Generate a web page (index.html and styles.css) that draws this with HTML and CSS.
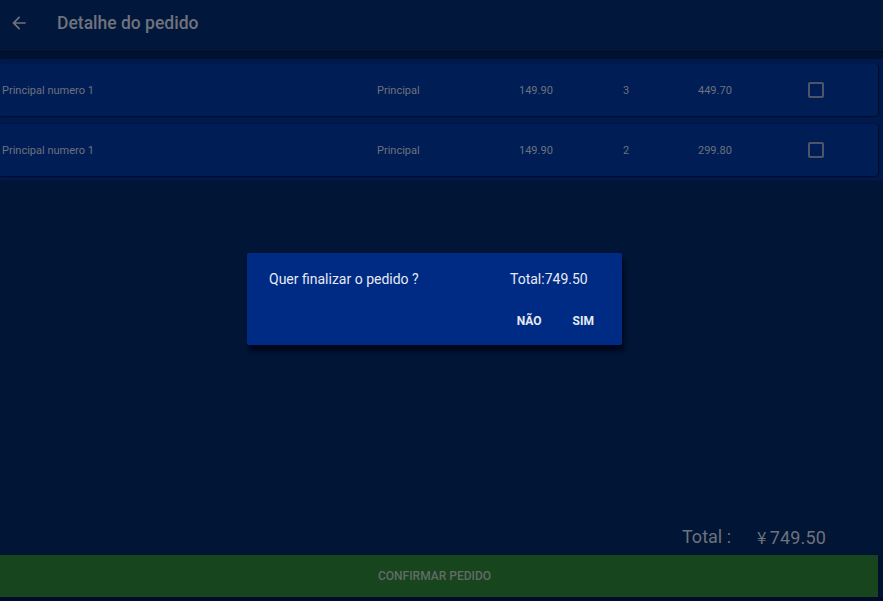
FILE: index.html
```html
<!DOCTYPE html>
<html lang="pt">
<head>
<meta charset="utf-8">
<title>Detalhe do pedido</title>
<link rel="stylesheet" href="styles.css">
</head>
<body>
<div class="screen">
  <header class="appbar">
    <svg class="back" width="24" height="24" viewBox="0 0 24 24"><path d="M20 11H7.83l5.59-5.59L12 4l-8 8 8 8 1.41-1.41L7.83 13H20v-2z" fill="currentColor"/></svg>
    <h1 class="title">Detalhe do pedido</h1>
  </header>
  <div class="band"></div>
  <section class="list">
    <div class="card">
      <span class="c-name">Principal numero 1</span>
      <span class="c-type">Principal</span>
      <span class="c-price">149.90</span>
      <span class="c-qty">3</span>
      <span class="c-sum">449.70</span>
      <span class="c-check"><span class="box"></span></span>
    </div>
    <div class="card">
      <span class="c-name">Principal numero 1</span>
      <span class="c-type">Principal</span>
      <span class="c-price">149.90</span>
      <span class="c-qty">2</span>
      <span class="c-sum">299.80</span>
      <span class="c-check"><span class="box"></span></span>
    </div>
  </section>
  <div class="spacer"></div>
  <div class="total-row">
    <span class="total-label">Total :</span>
    <span class="total-value"><span class="yen">¥</span>749.50</span>
  </div>
  <div class="confirm">CONFIRMAR PEDIDO</div>
  <div class="bottom-strip"></div>

  <div class="dialog">
    <div class="d-top">
      <span class="d-question">Quer finalizar o pedido ?</span>
      <span class="d-total">Total:749.50</span>
    </div>
    <div class="d-actions">
      <span class="d-btn">NÃO</span>
      <span class="d-btn">SIM</span>
    </div>
  </div>
</div>
</body>
</html>
```

FILE: styles.css
```css
* { box-sizing: border-box; }
html, body { margin: 0; padding: 0; }
body {
  width: 883px;
  height: 601px;
  overflow: hidden;
  background: #011536;
  font-family: Roboto, "Liberation Sans", sans-serif;
}
.screen {
  position: relative;
  width: 883px;
  height: 601px;
  display: flex;
  flex-direction: column;
  background: #011536;
}
.appbar {
  height: 51px;
  flex: none;
  display: flex;
  align-items: center;
  background: #01173b;
  color: #6f737b;
}
.back {
  width: 20px;
  height: 20px;
  margin-left: 9px;
  margin-top: -6px;
}
.title {
  margin: -6px 0 0 28px;
  font-size: 17.5px;
  font-weight: 500;
  color: #6f737b;
}
.band {
  height: 8px;
  flex: none;
  background: #00122f;
  border-top: 1px solid #000b22;
}
.list {
  flex: none;
  height: 121px;
  background: #001a4e;
  padding: 5px 5px 4px 0;
  display: flex;
  flex-direction: column;
  gap: 8px;
}
.card {
  height: 52px;
  display: flex;
  align-items: center;
  background: #001d56;
  border-radius: 0 3px 3px 0;
  box-shadow: 0 1px 2px rgba(0, 8, 30, 0.8), 1px 0 1px rgba(0, 8, 30, 0.6);
  font-size: 11px;
  color: #6d727c;
}
.c-name { width: 377px; padding-left: 2px; }
.c-type { width: 142px; }
.c-price { width: 104px; }
.c-qty { width: 75px; }
.c-sum { width: 110px; }
.c-check { display: flex; align-items: center; }
.box {
  width: 16px;
  height: 16px;
  border: 2px solid #4e5566;
  border-radius: 2px;
}
.spacer { flex: 1; }
.total-row {
  flex: none;
  height: 40px;
  display: flex;
  align-items: center;
  padding-left: 682px;
  font-size: 18px;
  color: #6e727b;
  padding-top: 3px;
}
.total-label { width: 75px; }
.yen {
  font-family: "Noto Sans CJK SC", Roboto, sans-serif;
  font-size: 17px;
  margin-right: 3px;
}
.total-value { letter-spacing: 0.2px; }
.confirm {
  flex: none;
  width: 878px;
  height: 42px;
  background: #16451e;
  display: flex;
  align-items: center;
  justify-content: center;
  padding-right: 9px;
  font-size: 12px;
  font-weight: 500;
  color: #646b66;
  box-shadow: 1px 1px 2px rgba(0, 8, 30, 0.7);
}
.bottom-strip {
  flex: none;
  height: 4px;
  background: #000c2a;
}
.dialog {
  position: absolute;
  left: 247px;
  top: 253px;
  width: 375px;
  height: 92px;
  background: #002b84;
  border-radius: 2px;
  box-shadow: 2px 6px 4px rgba(0, 6, 26, 0.9);
  display: flex;
  flex-direction: column;
}
.d-top {
  display: flex;
  align-items: center;
  height: 52px;
  padding-left: 22px;
  font-size: 14px;
  color: #e6eaf3;
}
.d-question { width: 241px; }
.d-actions {
  display: flex;
  justify-content: flex-end;
  gap: 31px;
  padding-right: 28px;
  font-size: 12px;
  font-weight: 700;
  color: #e6eaf3;
  margin-top: 9px;
}
```
